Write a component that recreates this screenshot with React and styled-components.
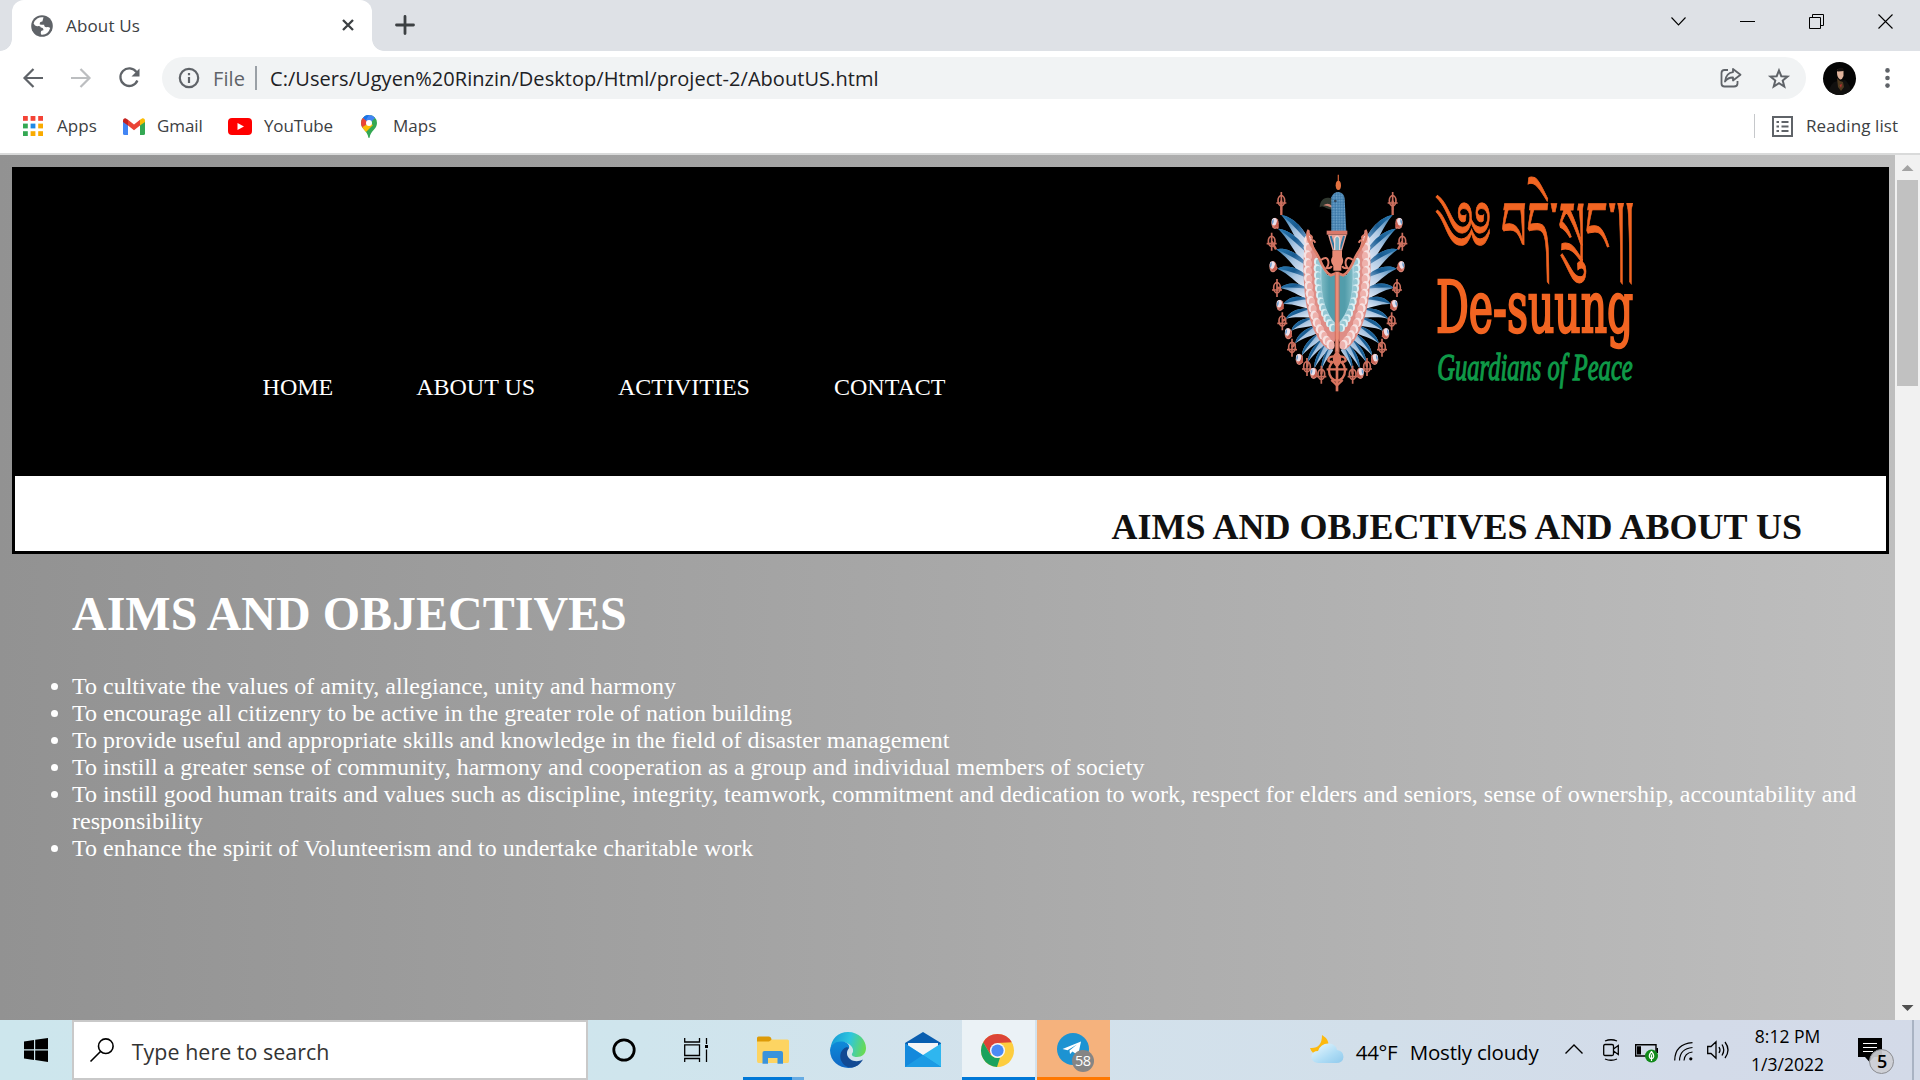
import React from "react";
import styled, { createGlobalStyle } from "styled-components";

const GlobalStyle = createGlobalStyle`
  * { box-sizing: border-box; }
  html, body { margin: 0; padding: 0; overflow: hidden; }
  svg { display: block; flex: none; overflow: visible; }
`;

const UI = `"Open Sans", "Noto Sans", sans-serif`;
const SERIF = `"Liberation Serif", "Times New Roman", serif`;

const Screen = styled.div`
  width: 1920px;
  height: 1080px;
  display: flex;
  flex-direction: column;
  overflow: hidden;
  background: #fff;
`;

/* ---------- shared ---------- */
const Slot = styled.div`
  flex: none;
  margin-left: ${(p) => p.$ml || 0}px;
  margin-top: ${(p) => p.$mt || 0}px;
`;
const Label = styled.span`
  flex: none;
  display: block;
  width: ${(p) => p.$w}px;
  margin-left: ${(p) => p.$ml || 0}px;
  margin-top: ${(p) => p.$mt || 0}px;
  font-family: ${UI};
  font-size: ${(p) => p.$size || 17}px;
  line-height: 24px;
  letter-spacing: ${(p) => p.$ls || 0}px;
  color: ${(p) => p.$color || "#3c4043"};
  white-space: nowrap;
`;

/* ---------- browser chrome ---------- */
const TabStrip = styled.div`
  flex: none;
  height: 51px;
  display: flex;
  background: #dee1e6;
`;
const Flare = styled.div`
  width: 12px;
  height: 51px;
  background: radial-gradient(circle at ${(p) => (p.$right ? "100%" : "0")} 0, #dee1e6 11.5px, #fff 12.2px) 0 39px / 12px 12px no-repeat;
`;
const Tab = styled.div`
  width: 360px;
  height: 51px;
  display: flex;
  align-items: flex-start;
  background: #fff;
  border-radius: 12px 12px 0 0;
`;
const WindowControls = styled.div`
  display: flex;
  margin-left: auto;
  padding-right: 27px;
  gap: 54px;
  padding-top: 14px;
`;
const Toolbar = styled.div`
  flex: none;
  height: 54px;
  display: flex;
  align-items: center;
`;
const Omnibox = styled.div`
  flex: none;
  width: 1644px;
  height: 42px;
  margin-left: 22px;
  display: flex;
  align-items: center;
  border-radius: 21px;
  background: #f1f3f4;
`;
const Rule = styled.div`
  flex: none;
  width: ${(p) => p.$w || 1}px;
  height: 24px;
  margin-left: ${(p) => p.$ml || 0}px;
  background: ${(p) => p.$color};
`;
const Avatar = styled.div`
  flex: none;
  width: 33px;
  height: 33px;
  margin-left: 17px;
  border-radius: 50%;
  background: #050505;
  overflow: hidden;
`;
const Bookmarks = styled.div`
  flex: none;
  height: 50px;
  display: flex;
  align-items: center;
  padding-bottom: 6px;
  border-bottom: 2px solid #d9dada;
`;
const Spacer = styled.div`
  flex: 1;
`;

/* ---------- page ---------- */
const Viewport = styled.div`
  flex: none;
  height: 865px;
  display: flex;
`;
const Page = styled.div`
  flex: none;
  width: 1895px;
  height: 865px;
  padding: 12px 6px 0 12px;
  background: linear-gradient(to right, #929292, #bebebe);
  font-family: ${SERIF};
`;
const Frame = styled.div`
  height: 387px;
  border: 3px solid #000;
  background: #fff;
`;
const Banner = styled.div`
  height: 306px;
  display: flex;
  background: #000;
`;
const Nav = styled.nav`
  flex: none;
  width: 1225px;
  display: flex;
  padding: 203px 0 0 247.6px;
`;
const NavLink = styled.a`
  display: block;
  width: ${(p) => p.$w}px;
  font-size: 24px;
  line-height: 28px;
  color: #fff;
  white-space: nowrap;
`;
const Subtitle = styled.div`
  height: 74px;
  padding: 31px 84px 0 0;
  font-size: 36px;
  line-height: 40px;
  font-weight: bold;
  text-align: right;
  color: #111;
`;
const Title = styled.h1`
  margin: 0;
  padding: 32px 0 0 60px;
  font-size: 48px;
  line-height: 56px;
  color: #fff;
`;
const Aims = styled.ul`
  margin: 0;
  padding: 31px 20px 0 60px;
  font-size: 24px;
  line-height: 27px;
  color: #fff;
`;
const Scrollbar = styled.div`
  flex: none;
  width: 25px;
  height: 865px;
  display: flex;
  flex-direction: column;
  align-items: center;
  background: #f1f1f1;
`;
const Thumb = styled.div`
  width: 21px;
  height: 206px;
  background: #c1c1c1;
`;
const Arrow = styled.div`
  width: 12px;
  height: 6px;
  background: ${(p) => (p.$down ? "#505050" : "#a3a3a3")};
  clip-path: ${(p) => (p.$down ? "polygon(0 0, 100% 0, 50% 100%)" : "polygon(0 100%, 100% 100%, 50% 0)")};
  margin: ${(p) => (p.$down ? "auto 0 9px" : "10px 0 9px")};
`;

/* ---------- taskbar ---------- */
const Taskbar = styled.div`
  flex: none;
  height: 60px;
  display: flex;
  background: linear-gradient(to right, #cde6ed 0, #cfe5ed 640px, #d3e2ec 1000px, #d2dfea 1380px, #d3dbe9 1700px, #d3dae8 100%);
`;
const StartButton = styled.div`
  width: 72px;
  padding: 18px 0 0 24px;
`;
const SearchBox = styled.div`
  flex: none;
  width: 516px;
  height: 60px;
  display: flex;
  align-items: flex-start;
  border: 2px solid #c9c9c9;
  background: #fff;
`;
const AppCell = styled.div`
  flex: none;
  position: relative;
  width: ${(p) => p.$w || 73}px;
  height: 60px;
  margin-right: ${(p) => p.$mr || 0}px;
  padding-top: ${(p) => p.$pt || 0}px;
  padding-right: ${(p) => p.$pr || 0}px;
  display: flex;
  align-items: center;
  justify-content: center;
  background: ${(p) => p.$bg || "transparent"};
  border-bottom: ${(p) => (p.$line ? `3px solid ${p.$line}` : "0")};
`;
const RunningMark = styled.div`
  position: absolute;
  left: 0;
  bottom: 0;
  width: 61px;
  height: 3px;
  background: linear-gradient(to right, #0078d7 49px, #66abe3 49px);
`;
const Badge = styled.div`
  position: absolute;
  left: ${(p) => p.$x}px;
  top: ${(p) => p.$y}px;
  width: ${(p) => p.$d}px;
  height: ${(p) => p.$d}px;
  border-radius: 50%;
  border: ${(p) => p.$border || "0"};
  background: ${(p) => p.$bg};
  color: ${(p) => p.$color};
  font: ${(p) => p.$weight || 400} ${(p) => p.$size}px/${(p) => p.$lh}px ${UI};
  letter-spacing: -0.5px;
  text-align: center;
`;
const Clock = styled.div`
  width: 90px;
  margin-left: 13px;
  padding-top: 2px;
  font: 17.5px/28px ${UI};
  text-align: center;
  letter-spacing: 0;
  color: #000;
`;
const ActionCenter = styled.div`
  position: relative;
  width: 54px;
  margin-left: 26px;
  padding-top: 18px;
`;
const PeekLine = styled.div`
  width: 8px;
  height: 60px;
  border-left: 2px solid #a9b3c3;
`;

const Stroke = ({ w, h, d, sw = 1.5, c = "#000", vb, children, ...r }) => (
  <svg width={w} height={h} viewBox={vb || `0 0 ${w} ${h}`} fill="none" stroke={c} strokeWidth={sw} {...r}>
    {d && <path d={d} />}
    {children}
  </svg>
);

const feathers = [
  [124, 165, 204, 262, 22, "vajra", 124, 122],
  [114, 206, 204, 298, 22, "ball", 105, 190],
  [108, 268, 202, 332, 23, "vajra", 95, 244],
  [112, 326, 202, 366, 23, "ball", 99, 320],
  [120, 384, 204, 398, 21, "vajra", 111, 383],
  [130, 432, 208, 428, 20, "ball", 120, 436],
  [138, 476, 214, 456, 18, "vajra", 127, 483],
  [154, 512, 222, 482, 17, "ball", 145, 521],
  [166, 550, 232, 504, 16, "vajra", 156, 562],
  [186, 586, 242, 524, 14, "ball", 178, 598],
  [204, 606, 252, 540, 13, "vajra", 201, 620],
  [224, 624, 262, 554, 12, "ball", 221, 640],
  [246, 626, 272, 566, 10, "vajra", 244, 643],
];
const plumes = [
  [203, 240], [202, 262], [202, 285], [202, 308], [202, 331], [203, 354], [205, 377], [208, 400],
  [211, 422], [216, 444], [222, 466], [229, 487], [238, 507], [248, 525], [259, 541], [270, 553],
];
const innerPlumes = [
  [230, 305], [229, 325], [230, 345], [231, 365], [233, 385], [236, 405], [240, 424], [245, 442],
  [251, 459], [258, 475], [266, 490], [275, 503],
];

function Feather({ f }) {
  const [tx, ty, bx, by, w, kind, ox, oy] = f;
  const dx = bx - tx;
  const dy = by - ty;
  const len = Math.hypot(dx, dy);
  const nx = dy / len;
  const ny = -dx / len;
  const at = (t, o) => `${(tx + dx * t + nx * o).toFixed(1)},${(ty + dy * t + ny * o).toFixed(1)}`;
  return (
    <g>
      <path d={`M${ox},${oy} L${tx},${ty}`} stroke="#cf6f5c" strokeWidth="7" />
      <path d={`M${at(0, 0)} C${at(0.2, w * 1.1)} ${at(0.65, w * 1.3)} ${at(1, w * 0.5)} L${at(1, -w * 0.9)} C${at(0.7, -w * 0.7)} ${at(0.4, 0)} ${at(0, 0)}Z`} fill="url(#quill)" />
      <path d={`M${at(0, 0)} C${at(0.2, w * 1.1)} ${at(0.65, w * 1.3)} ${at(1, w * 0.5)} C${at(0.7, w * 0.45)} ${at(0.35, w * 0.4)} ${at(0, 0)}Z`} fill="url(#vane)" />
      {kind === "ball" ? (
        <g>
          <ellipse cx={ox} cy={oy} rx="11" ry="17" fill="#d98577" />
          <ellipse cx={ox - 2} cy={oy - 5} rx="8" ry="11" fill="#ece0ea" />
          <path d={`M${ox - 8},${oy + 4} Q${ox - 2},${oy - 4} ${ox - 4},${oy - 14} Q${ox - 12},${oy - 8} ${ox - 8},${oy + 4}Z`} fill="#6d9fd0" />
          <path d={`M${ox - 5},${oy + 14} q11,-12 12,-24 l5,20Z`} fill="#c75f50" />
        </g>
      ) : (
        <g fill="none" stroke="#cc705f" strokeWidth="5">
          <path d={`M${ox},${oy - 26} V${oy + 28} M${ox - 15},${oy + 7} H${ox + 15}`} />
          <ellipse cx={ox} cy={oy} rx="10" ry="15" />
        </g>
      )}
    </g>
  );
}

function Wing() {
  return (
    <g>
      {feathers.map((f, i) => <Feather key={i} f={f} />)}
      <path d="M206,208 C188,260 188,330 194,398 C202,480 232,552 270,570 L291,530 V345 L262,345 L232,292Z" fill="#df8d86" />
      {plumes.map(([x, y], i) => (
        <g key={i}>
          <ellipse cx={x} cy={y} rx="11" ry="14" fill="#f6e2e2" />
          <ellipse cx={x + 5} cy={y + 3} rx="9" ry="12" fill="#eeb1ac" />
        </g>
      ))}
      <path d="M230,294 C220,380 232,470 291,520 V345 L262,345Z" fill="#aed6e2" />
      {innerPlumes.map(([x, y], i) => (
        <g key={i}>
          <ellipse cx={x + 1} cy={y} rx="9" ry="12" fill="#dceff3" />
          <ellipse cx={x + 5} cy={y + 2} rx="7" ry="10" fill="#94c7d3" />
        </g>
      ))}
      <path d="M245,322 C240,400 254,460 291,494 V345 L262,346Z" fill="url(#shield)" />
      <path d="M206,210 C192,236 222,262 236,292 C246,316 258,340 272,346 L288,340" fill="none" stroke="#dd7f6b" strokeWidth="8" />
      <path d="M206,224 q14,4 8,14 M226,248 q-8,-14 -12,0 M243,300 q18,-14 22,4 q2,14 -6,20 q14,2 16,-6" fill="none" stroke="#dd7f6b" strokeWidth="6" />
    </g>
  );
}

function Emblem() {
  return (
    <svg width="420" height="240" viewBox="0 30 1260 720">
      <defs>
        <linearGradient id="quill" x1="0" y1="0" x2="1" y2="1">
          <stop offset="0" stopColor="#2d76ab" />
          <stop offset="0.5" stopColor="#aec8e3" />
          <stop offset="1" stopColor="#f3f3fb" />
        </linearGradient>
        <linearGradient id="vane" x1="0" y1="0" x2="1" y2="0.6">
          <stop offset="0" stopColor="#2b7bb3" />
          <stop offset="0.55" stopColor="#175a90" />
          <stop offset="1" stopColor="#6d9cc6" />
        </linearGradient>
        <linearGradient id="shield" x1="0" y1="0" x2="1" y2="0">
          <stop offset="0" stopColor="#7dbac4" />
          <stop offset="0.5" stopColor="#529dab" />
        </linearGradient>
        <pattern id="scales" width="8" height="8" patternUnits="userSpaceOnUse">
          <rect width="8" height="8" fill="#4b87b5" />
          <circle cx="2" cy="2" r="1.6" fill="#9cc7e2" />
          <circle cx="6" cy="6" r="1.6" fill="#2a6595" />
        </pattern>
      </defs>
      <Wing />
      <g transform="translate(582 0) scale(-1 1)"><Wing /></g>
      <path d="M278,118 C256,106 240,120 239,142 C248,134 256,146 278,150Z" fill="#30382f" />
      <path d="M250,136 q14,-10 26,2 v5 q-14,-6 -26,-7Z" fill="#c98072" />
      <path d="M274,215 V112 Q280,96 296,96 Q312,98 314,116 L319,215Z" fill="url(#scales)" />
      <circle cx="286" cy="123" r="4" fill="#31475e" />
      <path d="M295,44 V66" stroke="#c35a34" strokeWidth="4" />
      <ellipse cx="295" cy="76" rx="8" ry="14" fill="#e2713f" />
      <path d="M260,212 H322 V224 H260Z" fill="#d9786a" />
      <path d="M264,224 H320 L306,272 H278Z" fill="#e9a399" />
      <path d="M272,228 l12,40 M312,228 l-12,40" stroke="#2e78a3" strokeWidth="6" />
      <path d="M284,270 V235 Q292,222 299,235 V270" fill="#79b2c8" stroke="#f0d4d0" strokeWidth="4" />
      <path d="M277,272 H306 V290 Q314,304 304,318 V332 H280 V318 Q268,304 277,290Z" fill="#e88b76" />
      <path d="M286,335 V578 M297,335 V578" stroke="#c8604f" strokeWidth="3" />
      <path d="M287,335 H296 V578 H287Z" fill="#ec8c77" />
      <path d="M291,572 V694" stroke="#d9755f" strokeWidth="8" />
      <g fill="none" stroke="#d9755f" strokeWidth="7">
        <ellipse cx="291" cy="632" rx="24" ry="30" />
        <path d="M291,590 q-26,-4 -26,12 q6,6 12,2 M291,590 q26,-4 26,12 q-6,6 -12,2 M260,628 H322 M274,660 L291,676 L308,660" />
        <ellipse cx="291" cy="598" rx="9" ry="18" fill="#d9755f" />
      </g>
      <g fill="#f26522" stroke="#f26522">
        <text transform="translate(586 272) scale(1 1.4)" strokeWidth="2" fontFamily='"Noto Serif Tibetan","Noto Sans Tibetan","Noto Sans",sans-serif' fontSize="150" textLength="596" lengthAdjust="spacingAndGlyphs">༄༅ བདེ་སྲུང་།།</text>
        <text transform="translate(588 515) scale(1 1.23)" strokeWidth="6" fontFamily='"DejaVu Serif",serif' fontSize="171" textLength="592" lengthAdjust="spacingAndGlyphs">De-suung</text>
      </g>
      <text transform="translate(592 660) scale(1 1.25)" fill="#0f9a48" stroke="#0f9a48" strokeWidth="3" fontFamily='"Z003","URW Chancery L","Liberation Serif",cursive' fontStyle="italic" fontSize="90" textLength="586" lengthAdjust="spacingAndGlyphs">Guardians of Peace</text>
    </svg>
  );
}

const aims = [
  "To cultivate the values of amity, allegiance, unity and harmony",
  "To encourage all citizenry to be active in the greater role of nation building",
  "To provide useful and appropriate skills and knowledge in the field of disaster management",
  "To instill a greater sense of community, harmony and cooperation as a group and individual members of society",
  "To instill good human traits and values such as discipline, integrity, teamwork, commitment and dedication to work, respect for elders and seniors, sense of ownership, accountability and responsibility",
  "To enhance the spirit of Volunteerism and to undertake charitable work",
];

const appDots = ["#f44336", "#f44336", "#f44336", "#34a853", "#1e88e5", "#f9ab00", "#34a853", "#f9ab00", "#f9ab00"];

function BrowserChrome() {
  return (
    <>
      <TabStrip>
        <Flare />
        <Tab>
          <Slot $ml={19} $mt={15}>
            <svg width="22" height="22" viewBox="0 0 22 22">
              <circle cx="11" cy="11" r="10.8" fill="#5f6368" />
              <path d="M12.5 2.3 A8.8 8.8 0 0 0 2.6 8.6 Q4 12 7.6 11 Q9.6 10.8 9.8 12.6 Q12.6 12.6 12.4 15.2 Q11 15.4 10.2 16 Q9.4 17.6 10 19.6 Q17 20.4 19.2 13 Q17.5 11.6 15.4 12.2 Q13 12.2 13.2 9.8 Q11 9.8 8.8 9.4 Q8.4 6.6 11.4 6.6 Q12 4 12.5 2.3Z" fill="#fff" />
            </svg>
          </Slot>
          <Label $ml={13} $mt={14} $w={276} $ls={0.15}>About Us</Label>
          <Slot $mt={19}><Stroke w={12} h={12} d="M1 1 L11 11 M11 1 L1 11" c="#3c4043" sw={2.3} /></Slot>
        </Tab>
        <Flare $right />
        <Slot $ml={12} $mt={16}><Stroke w={18} h={18} d="M9 0.5 V17.5 M0.5 9 H17.5" c="#3c4043" sw={2.8} strokeLinecap="round" /></Slot>
        <WindowControls>
          <Stroke w={15} h={15} d="M0.5 3.5 L7.5 11 L14.5 3.5" sw={1.1} />
          <Stroke w={15} h={15} d="M0 7.5 H15" sw={1} />
          <Stroke w={15} h={15} d="M0.5 3.5 H11.5 V14.5 H0.5Z M3.5 3.5 V0.5 H14.5 V11.5 H11.5" sw={1} />
          <Stroke w={15} h={15} d="M0.5 0.5 L14.5 14.5 M14.5 0.5 L0.5 14.5" sw={1.1} />
        </WindowControls>
      </TabStrip>
      <Toolbar>
        <Slot $ml={23}><Stroke w={20} h={20} d="M20 10 H2 M10.5 1 L1.5 10 L10.5 19" c="#5f6368" sw={2.2} /></Slot>
        <Slot $ml={28}><Stroke w={20} h={20} d="M0 10 H18 M9.5 1 L18.5 10 L9.5 19" c="#bcbec0" sw={2.2} /></Slot>
        <Slot $ml={28}>
          <Stroke w={21} h={20} d="M17.5 4.2 A8.8 8.8 0 1 0 18.4 12.5" c="#5f6368" sw={2.3}>
            <path d="M20.5 0.5 V8.5 H12.5Z" fill="#5f6368" stroke="none" />
          </Stroke>
        </Slot>
        <Omnibox>
          <Slot $ml={17}>
            <Stroke w={20} h={20} d="M10 9 V15 M10 5 V7.2" c="#5f6368" sw={2.2}><circle cx="10" cy="10" r="9.2" /></Stroke>
          </Slot>
          <Label $ml={14} $mt={2} $w={41} $size={20} $ls={0.1} $color="#5f6368">File</Label>
          <Rule $w={2} $color="#9aa0a6" $ml={1} />
          <Label $ml={13} $mt={2} $w={620} $size={20} $ls={0.05} $color="#202124">C:/Users/Ugyen%20Rinzin/Desktop/Html/project-2/AboutUS.html</Label>
          <Spacer />
          <Stroke w={22} h={20} d="M8 2 H4.5 Q1.5 2 1.5 5 V15.500 Q1.500 18.500 4.500 18.500 H14 Q17.500 18.500 17.500 15.500 V13" c="#5f6368" sw={1.8}>
            <path d="M13 1 L20.500 6.800 L13 12.500 V9.500 Q8 9.300 5 13.500 Q6 5 13 4.200Z" strokeLinejoin="round" />
          </Stroke>
          <Slot $ml={26}>
            <Stroke w={22} h={21} d="M11 2.500 L13.300 8.200 L19.500 8.600 L14.700 12.500 L16.300 18.600 L11 15.200 L5.700 18.600 L7.300 12.500 L2.500 8.600 L8.700 8.200Z" c="#5f6368" sw={2} />
          </Slot>
          <Slot $ml={16} />
        </Omnibox>
        <Avatar>
          <svg width="33" height="33" viewBox="0 0 33 33">
            <path d="M5 33 Q7 20 14 19 L22 18 Q28 22 28 33Z" fill="#11100f" />
            <path d="M14 8 Q18 5 20.500 9 L20.500 14 Q19 18 17 17.500 Q14 15 14 11Z" fill="#e0b39c" />
            <path d="M13.500 9 Q15 4.500 20 6 L21 9 L15 9.500Z" fill="#15100e" />
            <path d="M14 16 L17 19 L20 20 L21 25 L18 29 L15 25Z" fill="#4f3a20" />
            <path d="M16.500 23 L19 22 L18 26Z" fill="#b52f2f" />
          </svg>
        </Avatar>
        <Slot $ml={29}>
          <svg width="5" height="20" viewBox="0 0 5 20" fill="#5f6368"><circle cx="2.500" cy="2.400" r="2.300" /><circle cx="2.500" cy="10" r="2.300" /><circle cx="2.500" cy="17.600" r="2.300" /></svg>
        </Slot>
      </Toolbar>
      <Bookmarks>
        <Slot $ml={23}>
          <svg width="20" height="20" viewBox="0 0 20 20">
            {appDots.map((c, i) => <rect key={i} x={(i % 3) * 7.6} y={Math.floor(i / 3) * 7.6} width="4.800" height="4.800" fill={c} />)}
          </svg>
        </Slot>
        <Label $ml={14} $w={66} $ls={0.1}>Apps</Label>
        <svg width="22" height="17" viewBox="0 0 22 17">
          <path d="M0 3 L5 6.500 V17 H1.500 Q0 17 0 15.500Z" fill="#4285f4" />
          <path d="M22 3 L17 6.500 V17 H20.500 Q22 17 22 15.500Z" fill="#34a853" />
          <path d="M5 1.800 L11 6.400 L17 1.800 V7.600 L11 12.200 L5 7.600Z" fill="#ea4335" />
          <path d="M0 3 Q0 0 2.500 0.200 L5 1.800 V7.600 L0 4Z" fill="#c5221f" />
          <path d="M22 3 Q22 0 19.500 0.200 L17 1.800 V7.600 L22 4Z" fill="#fbbc04" />
        </svg>
        <Label $ml={12} $w={71} $ls={-0.1}>Gmail</Label>
        <svg width="24" height="17" viewBox="0 0 24 17"><rect width="24" height="17" rx="4" fill="#f00" /><path d="M9.500 5 L16 8.500 L9.500 12Z" fill="#fff" /></svg>
        <Label $ml={12} $w={97} $ls={-0.15}>YouTube</Label>
        <svg width="16" height="23" viewBox="0 0 16 23">
          <defs><clipPath id="pin"><path d="M8 0 A8 8 0 0 1 16 8 C16 14 9.500 16 8.600 22.400 Q8 23.500 7.400 22.400 C6.500 16 0 14 0 8 A8 8 0 0 1 8 0Z" /></clipPath></defs>
          <g clipPath="url(#pin)">
            <rect width="16" height="23" fill="#34a853" />
            <path d="M16 0 H0 L2 4 L8 9 L16 1Z" fill="#4285f4" />
            <path d="M2 0 L8 0 L5 5 L8 8 L3 4Z" fill="#1a73e8" />
            <path d="M0 2 L2 3 L8 8 L1 13 L-1 10Z" fill="#ea4335" />
            <path d="M8 8 L12 10 L4 18 L0 13Z" fill="#fbbc04" />
            <circle cx="8" cy="8" r="3" fill="#fff" />
          </g>
        </svg>
        <Label $ml={16} $w={60} $ls={0}>Maps</Label>
        <Spacer />
        <Rule $color="#c6c8cb" />
        <Slot $ml={17}>
          <Stroke w={21} h={21} d="M1 1 H20 V20 H1Z M4.500 6 H7 M9.500 6 H16.500 M4.500 10.500 H7 M9.500 10.500 H16.500 M4.500 15 H7 M9.500 15 H16.500" c="#5f6368" sw={2} />
        </Slot>
        <Label $ml={13} $w={114} $ls={0.1}>Reading list</Label>
      </Bookmarks>
    </>
  );
}

function DesktopTaskbar() {
  return (
    <Taskbar>
      <StartButton>
        <svg width="24" height="24" viewBox="0 0 24 24"><path d="M0 3.400 L10 2 V11.300 H0Z M11.200 1.800 L24 0 V11.300 H11.200Z M0 12.500 H10 V21.900 L0 20.500Z M11.200 12.500 H24 V24 L11.200 22.100Z" /></svg>
      </StartButton>
      <SearchBox>
        <Slot $ml={16} $mt={16}>
          <Stroke w={24} h={24} sw={1.6} d="M10.500 13.500 L0.500 23.500"><circle cx="15.800" cy="8.200" r="7.300" /></Stroke>
        </Slot>
        <Label $ml={18} $mt={18} $w={240} $size={21.400} $ls={0.05} $color="#333">Type here to search</Label>
      </SearchBox>
      <AppCell $w={72}><Stroke w={24} h={24} sw={2.8}><circle cx="12" cy="12" r="10.200" /></Stroke></AppCell>
      <AppCell $w={73} $mr={10}>
        <Stroke w={24} h={24} sw={1.3} d="M0.700 0 V4 H15.500 V0 M0.700 6.800 H15.500 V17.500 H0.700Z M0.700 24 V20.500 H15.500 V24 M22.500 0 V6 M22.500 11.500 V24">
          <rect x="21" y="7" width="3" height="3" fill="#000" stroke="none" />
        </Stroke>
      </AppCell>
      <AppCell $w={61} $mr={7}>
        <svg width="32" height="28" viewBox="0 0 32 28">
          <path d="M0 2 Q0 0.500 1.500 0.500 H12 Q14 0.500 14.500 3 V7 H0Z" fill="#dd9a07" />
          <path d="M0 5.500 H12 L15 3.500 H30.500 Q32 3.500 32 5 V25 Q32 27 30.500 27 H1.500 Q0 27 0 25Z" fill="#fdd462" />
          <path d="M5.500 17 Q5.500 15 7.500 15 H24 Q26 15 26 17 V27.800 H20.500 V22 H11 V27.800 H5.500Z" fill="#3a93db" />
        </svg>
        <RunningMark />
      </AppCell>
      <AppCell $w={76} $pr={2}>
        <svg width="36" height="36" viewBox="0 0 36 36">
          <defs>
            <linearGradient id="edgeTop" x1="0" y1="0.400" x2="1" y2="0.600"><stop offset="0" stopColor="#159bd7" /><stop offset="0.500" stopColor="#2fc6de" /><stop offset="1" stopColor="#6adb4f" /></linearGradient>
            <linearGradient id="edgeLeft" x1="0" y1="0" x2="0" y2="1"><stop offset="0" stopColor="#0e8bd9" /><stop offset="1" stopColor="#1067c4" /></linearGradient>
          </defs>
          <path d="M0.500 17 C1 7 8 0 18 0 C29 0 36 8 36 16 C36 22 32 25 27 25 C22 25 21 22.500 22.500 21 C25 17 20 10 12 10 C6 10 2 13 0.500 17Z" fill="url(#edgeTop)" />
          <path d="M0 18 C1 12 6 9 12 9.500 C18 10 20 14 19 16 C14 16 12 24 17 29 C21 33 26 33 28 33 C18 40 0 34 0 18Z" fill="url(#edgeLeft)" />
          <path d="M14 16.500 C6 23 12 36 22 35.500 C28 34.500 31 31 33 27.500 C27 31 18 29 17 22 C16.700 19 18 17.500 19 16 C17.500 14.500 15 15.500 14 16.500Z" fill="#124a93" />
        </svg>
      </AppCell>
      <AppCell $w={74} $mr={1} $pr={1}>
        <svg width="36" height="36" viewBox="0 0 36 36">
          <path d="M0 11 L18 0 L36 11 V16 H0Z" fill="#0a5eb0" />
          <path d="M3 11 H33 V22 L18 30 L3 22Z" fill="#f5f5f7" />
          <path d="M0 11.500 L18 23 L36 11.500 V35 H0Z" fill="#2fb6ef" />
          <path d="M0 11.500 L36 35 H0Z" fill="#1489dc" />
          <path d="M18 23 L36 35 H0Z" fill="#1c9be4" />
        </svg>
      </AppCell>
      <AppCell $bg="#ebf2f6" $line="#0078d7" $mr={2} $pt={3} $pr={2}>
        <svg width="33" height="33" viewBox="0 0 33 33">
          <circle cx="16.500" cy="16.500" r="16.500" fill="#fdcd3f" />
          <path d="M2.200 8.250 A16.500 16.500 0 0 1 30.800 8.250 L16.500 9 L9.400 20.600Z" fill="#dc4437" />
          <path d="M2.200 8.250 L9.400 20.600 Q13 25 19 23.800 L16 33 A16.500 16.500 0 0 1 2.200 8.250Z" fill="#1aa25d" />
          <circle cx="16.500" cy="16.500" r="7.600" fill="#f4f6f8" />
          <circle cx="16.500" cy="16.500" r="6.100" fill="#4a8af4" />
        </svg>
      </AppCell>
      <AppCell $bg="#f5b27d" $line="#ff7800" $pt={1}>
        <svg width="32" height="34" viewBox="0 0 32 34">
          <circle cx="16" cy="17" r="16" fill="#1d93d2" />
          <path d="M5.500 17 L24 9.500 L21 23.500 L15.500 19.500 L13 22 L12.500 18.500 L20 12.500 L10.500 18.300Z" fill="#fff" />
        </svg>
        <Badge $x={35} $y={30} $d={22} $bg="#858585" $color="#fff" $size={14.5} $lh={22}>58</Badge>
      </AppCell>
      <Slot $ml={200} $mt={15}>
        <svg width="34" height="29" viewBox="0 0 34 29">
          <defs><linearGradient id="cloud" x1="0" y1="0" x2="1" y2="1"><stop offset="0" stopColor="#eef9ff" /><stop offset="0.600" stopColor="#aedcf5" /><stop offset="1" stopColor="#8fc9ec" /></linearGradient></defs>
          <path d="M12 0 Q20 5 18 11 L8 20 Q2 19 0 13 Q12 14 12 0Z" fill="#fcb90f" />
          <path d="M8 28 Q1 27 1.500 21 Q2.500 16 8 16 Q11 8 19 8.500 Q26 9 27 15 Q33.500 16 33.500 22 Q33 28 26 28Z" fill="url(#cloud)" />
        </svg>
      </Slot>
      <Label $ml={12} $mt={20} $w={54} $size={20.500} $ls={-0.300} $color="#000">44°F</Label>
      <Label $w={155} $mt={20} $size={20.500} $ls={-0.200} $color="#000">Mostly cloudy</Label>
      <Slot $mt={24}><Stroke w={18} h={10} d="M0.500 9.500 L9 1 L17.500 9.500" sw={1.4} /></Slot>
      <Slot $ml={20} $mt={19}>
        <Stroke w={16} h={22} d="M2 2 Q8 -0.500 14 2 M2 20 Q8 22.500 14 20 M2 5.500 H9 Q10.500 5.500 10.500 7 V15 Q10.500 16.500 9 16.500 H2 Q0.700 16.500 0.700 15 V7 Q0.700 5.500 2 5.500 M10.500 10 L15.300 6.500 V15.500 L10.500 12" sw={1.3} />
      </Slot>
      <Slot $ml={16} $mt={24}>
        <svg width="23" height="19" viewBox="0 0 23 19">
          <path d="M0.700 0.700 H21 V12 H0.700Z" fill="none" stroke="#000" strokeWidth="1.400" />
          <path d="M2 2.200 H6 V10.500 H2Z M21.500 4 h1.500 v5 h-1.500Z" />
          <circle cx="16.500" cy="12" r="6.500" fill="#128a1b" />
          <path d="M16.500 7.500 Q21 13 16.500 15 Q12 13 16.500 7.500 M16.500 10.500 V17" fill="none" stroke="#fff" strokeWidth="1.200" />
        </svg>
      </Slot>
      <Slot $ml={16} $mt={22}>
        <Stroke w={19} h={19} d="M0.700 18.500 Q1 2 18.500 0.700 M5.500 18.500 Q6 6.500 18.500 5.500 M10 18.500 Q10.500 11 18.500 10" sw={1.200}><circle cx="16.800" cy="16.800" r="1.600" fill="#000" stroke="none" /></Stroke>
      </Slot>
      <Slot $ml={14} $mt={21}>
        <Stroke w={23} h={18} d="M0.700 5.500 H4 L9 0.800 V17.200 L4 12.500 H0.700Z M12 6 Q14 9 12 12 M15 3.500 Q18.500 9 15 14.500 M18 1 Q24 9 18 17" sw={1.300} />
      </Slot>
      <Clock>8:12 PM<br />1/3/2022</Clock>
      <ActionCenter>
        <svg width="24" height="24" viewBox="0 0 24 24"><path d="M0 0 H24 V19 H16 L11.500 24 L7 19 H0Z" /><path d="M5 5.500 H19 M5 9.500 H19 M5 13.500 H15" stroke="#fff" strokeWidth="1.200" /></svg>
        <Badge $x={11} $y={29} $d={25} $bg="rgba(205,207,212,0.92)" $border="1px solid #8b8d92" $color="#000" $size={18} $lh={23} $weight={600}>5</Badge>
      </ActionCenter>
      <PeekLine />
    </Taskbar>
  );
}

export default function App() {
  return (
    <Screen>
      <GlobalStyle />
      <BrowserChrome />
      <Viewport>
        <Page>
          <Frame>
            <Banner>
              <Nav>
                <NavLink $w={153.6}>HOME</NavLink>
                <NavLink $w={201.8}>ABOUT US</NavLink>
                <NavLink $w={216}>ACTIVITIES</NavLink>
                <NavLink $w={115}>CONTACT</NavLink>
              </Nav>
              <Emblem />
            </Banner>
            <Subtitle>AIMS AND OBJECTIVES AND ABOUT US</Subtitle>
          </Frame>
          <Title>AIMS AND OBJECTIVES</Title>
          <Aims>{aims.map((t) => <li key={t}>{t}</li>)}</Aims>
        </Page>
        <Scrollbar>
          <Arrow />
          <Thumb />
          <Arrow $down />
        </Scrollbar>
      </Viewport>
      <DesktopTaskbar />
    </Screen>
  );
}
